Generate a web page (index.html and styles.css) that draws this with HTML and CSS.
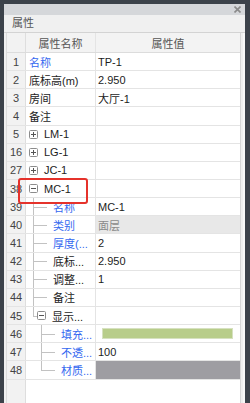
FILE: index.html
```html
<!DOCTYPE html>
<html lang="zh-CN">
<head>
<meta charset="utf-8">
<link rel="stylesheet" href="styles.css">
</head>
<body>
<div class="window">
  <div class="titlebar">
    <svg class="close" width="7" height="7" viewBox="0 0 7 7"><path d="M0.5 0.5L6.5 6.5M6.5 0.5L0.5 6.5" stroke="#8a8a8a" stroke-width="1.6"/></svg>
  </div>
  <div class="panel">
    <div class="panel-title">属性</div>
    <div class="grid-wrap">
      <div class="grid">
        <div class="row head"><div class="num"></div><div class="name center">属性名称</div><div class="val center">属性值</div></div>

        <div class="row"><div class="num">1</div><div class="name blue">名称</div><div class="val">TP-1</div></div>
        <div class="row"><div class="num">2</div><div class="name">底标高(m)</div><div class="val">2.950</div></div>
        <div class="row"><div class="num">3</div><div class="name">房间</div><div class="val">大厅-1</div></div>
        <div class="row"><div class="num">4</div><div class="name">备注</div><div class="val"></div></div>

        <div class="row"><div class="num">5</div><div class="name"><svg class="box" width="9" height="9" viewBox="0 0 9 9"><rect x="0.5" y="0.5" width="8" height="8" rx="1" fill="#fff" stroke="#8c8c8c"/><path d="M2 4.5H7M4.5 2V7" stroke="#555"/></svg>LM-1</div><div class="val"></div></div>
        <div class="row"><div class="num">16</div><div class="name"><svg class="box" width="9" height="9" viewBox="0 0 9 9"><rect x="0.5" y="0.5" width="8" height="8" rx="1" fill="#fff" stroke="#8c8c8c"/><path d="M2 4.5H7M4.5 2V7" stroke="#555"/></svg>LG-1</div><div class="val"></div></div>
        <div class="row"><div class="num">27</div><div class="name"><svg class="box" width="9" height="9" viewBox="0 0 9 9"><rect x="0.5" y="0.5" width="8" height="8" rx="1" fill="#fff" stroke="#8c8c8c"/><path d="M2 4.5H7M4.5 2V7" stroke="#555"/></svg>JC-1</div><div class="val"></div></div>
        <div class="row"><div class="num">38</div><div class="name"><svg class="box" width="9" height="9" viewBox="0 0 9 9"><rect x="0.5" y="0.5" width="8" height="8" rx="1" fill="#fff" stroke="#8c8c8c"/><path d="M2 4.5H7" stroke="#555"/></svg>MC-1</div><div class="val"></div></div>

        <div class="row"><div class="num">39</div><div class="name blue"><span class="guide tee"></span><span class="leaf"></span>名称</div><div class="val">MC-1</div></div>
        <div class="row"><div class="num">40</div><div class="name blue"><span class="guide tee"></span><span class="leaf"></span>类别</div><div class="val readonly">面层</div></div>
        <div class="row"><div class="num">41</div><div class="name blue"><span class="guide tee"></span><span class="leaf"></span>厚度(...</div><div class="val">2</div></div>
        <div class="row"><div class="num">42</div><div class="name"><span class="guide tee"></span><span class="leaf"></span>底标...</div><div class="val">2.950</div></div>
        <div class="row"><div class="num">43</div><div class="name"><span class="guide tee"></span><span class="leaf"></span>调整...</div><div class="val">1</div></div>
        <div class="row"><div class="num">44</div><div class="name"><span class="guide tee"></span><span class="leaf"></span>备注</div><div class="val"></div></div>
        <div class="row"><div class="num">45</div><div class="name"><span class="guide end"></span><svg class="box" width="9" height="9" viewBox="0 0 9 9"><rect x="0.5" y="0.5" width="8" height="8" rx="1" fill="#fff" stroke="#8c8c8c"/><path d="M2 4.5H7" stroke="#555"/></svg>显示...</div><div class="val"></div></div>

        <div class="row"><div class="num">46</div><div class="name blue"><span class="guide"></span><span class="guide tee"></span><span class="leaf"></span>填充...</div><div class="val"><span class="swatch"></span></div></div>
        <div class="row"><div class="num">47</div><div class="name blue"><span class="guide"></span><span class="guide tee"></span><span class="leaf"></span>不透...</div><div class="val">100</div></div>
        <div class="row"><div class="num">48</div><div class="name blue"><span class="guide"></span><span class="guide end"></span><span class="leaf"></span>材质...</div><div class="val material"></div></div>

        <div class="filler"><div class="num"></div></div>
      </div>
      <div class="strip"></div>
    </div>
  </div>
  <div class="highlight"></div>
</div>
</body>
</html>
```
FILE: styles.css
```css
html, body {
  margin: 0;
  padding: 0;
}
body {
  font-family: "Liberation Sans", "Noto Sans CJK SC", sans-serif;
  font-size: 11px;
  color: #1c1c1c;
}
.window {
  position: relative;
  width: 250px;
  height: 403px;
  box-sizing: border-box;
  padding: 4px 5px 0 4px;
  background: #3c424a;
  display: flex;
  flex-direction: column;
  overflow: hidden;
}
.titlebar {
  height: 11px;
  flex: none;
  background: #d5d7da;
  display: flex;
  justify-content: flex-end;
  align-items: center;
  padding-right: 4px;
}
.panel {
  flex: 1;
  background: #f0f0f0;
  display: flex;
  flex-direction: column;
  min-height: 0;
}
.panel-title {
  height: 18px;
  box-sizing: border-box;
  border-bottom: 1px solid #d3d3d3;
  padding-left: 8px;
  line-height: 17px;
  color: #555;
  flex: none;
}
.grid-wrap {
  flex: 1;
  display: flex;
  padding-left: 2px;
  min-height: 0;
}
.grid {
  flex: 1;
  display: flex;
  flex-direction: column;
  background: #fff;
  border-left: 1px solid #dcdcdc;
  border-right: 1px solid #d6d6d6;
}
.strip {
  width: 4px;
  background: #efefef;
  box-shadow: inset -2px 0 0 #f8f8f8;
}
.row {
  display: flex;
  flex: none;
  height: 18.15px;
  box-sizing: border-box;
  border-bottom: 1px solid #e4e4e4;
}
.row.head {
  height: 20px;
  background: #f3f3f3;
  border-bottom: 1px solid #dcdcdc;
  color: #555;
}
.num {
  width: 19px;
  flex: none;
  box-sizing: border-box;
  border-right: 1px solid #dedede;
  background: #f2f2f2;
  color: #444;
  display: flex;
  align-items: center;
  justify-content: center;
}
.name {
  width: 70px;
  flex: none;
  box-sizing: border-box;
  border-right: 1px solid #e4e4e4;
  padding-left: 3px;
  display: flex;
  align-items: center;
  white-space: nowrap;
  overflow: hidden;
}
.val {
  flex: 1;
  padding-left: 2px;
  display: flex;
  align-items: center;
  white-space: nowrap;
  min-width: 0;
}
.center {
  justify-content: center;
  padding-left: 0;
}
.blue {
  color: #3468f0;
}
.box {
  flex: none;
  margin-right: 6px;
  display: block;
}
.guide {
  width: 8px;
  flex: none;
  align-self: stretch;
  position: relative;
}
.guide.tee::before,
.guide.end::before {
  content: "";
  position: absolute;
  left: 4px;
  top: 0;
  bottom: -1px;
  border-left: 1px solid #c2c2c2;
}
.guide.end::before {
  bottom: 50%;
}
.guide.tee::after,
.guide.end::after {
  content: "";
  position: absolute;
  left: 4px;
  right: 0;
  top: 50%;
  border-top: 1px solid #c2c2c2;
}
.leaf {
  width: 16px;
  flex: none;
  align-self: stretch;
  position: relative;
}
.leaf::before {
  content: "";
  position: absolute;
  left: 0;
  width: 10px;
  top: 50%;
  border-top: 1px solid #c2c2c2;
}
.val.readonly {
  background: #e8e8e8;
  color: #8a8a8a;
}
.val.material {
  background: #9e9da2;
}
.swatch {
  flex: 1;
  height: 9px;
  margin: 0 8px 0 5px;
  background: #b8cd8a;
  box-shadow: 0 0 0 1px #d6e1c0;
}
.filler {
  flex: 1;
  display: flex;
}
.highlight {
  position: absolute;
  left: 18px;
  top: 178px;
  width: 70px;
  height: 26px;
  box-sizing: border-box;
  border: 2px solid #e5322b;
  border-radius: 3px;
}
```
